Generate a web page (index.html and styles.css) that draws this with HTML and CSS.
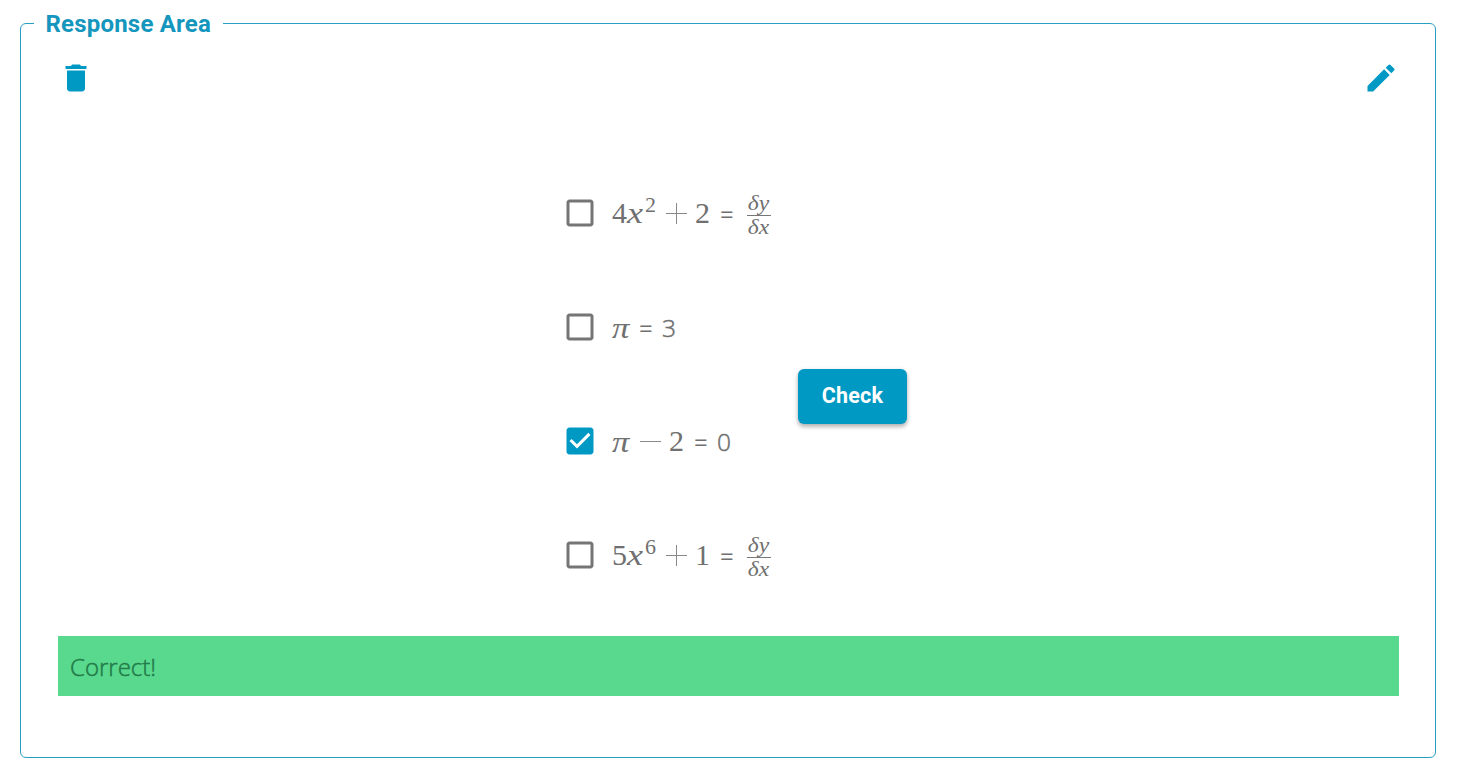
FILE: index.html
```html
<!DOCTYPE html>
<html lang="en">
<head>
<meta charset="utf-8">
<title>Response Area</title>
<link rel="stylesheet" href="styles.css">
</head>
<body>
<fieldset class="area">
  <legend class="legend">Response Area</legend>
  <div class="toolbar">
    <svg class="icon" viewBox="0 0 24 24"><path d="M6 19c0 1.1.9 2 2 2h8c1.1 0 2-.9 2-2V7H6v12zM19 4h-3.5l-1-1h-5l-1 1H5v2h14V4z"/></svg>
    <svg class="icon" viewBox="0 0 24 24"><path d="M3 17.25V21h3.75L17.81 9.94l-3.75-3.75L3 17.25zM20.71 7.04c.39-.39.39-1.02 0-1.41l-2.34-2.34a.9959.9959 0 0 0-1.41 0l-1.83 1.83 3.75 3.75 1.83-1.83z"/></svg>
  </div>
  <div class="question">
    <div class="options">
      <label class="option">
        <svg class="box" viewBox="0 0 24 24"><path d="M19 5v14H5V5h14m0-2H5c-1.1 0-2 .9-2 2v14c0 1.1.9 2 2 2h14c1.1 0 2-.9 2-2V5c0-1.1-.9-2-2-2z"/></svg>
        <span class="math"><span class="num">4</span><i class="var">x</i><span class="sup">2</span><span class="op plus"></span><span class="num term">2</span><span class="eq">=</span><span class="frac"><i class="part">δy</i><span class="bar"></span><i class="part">δx</i></span></span>
      </label>
      <label class="option">
        <svg class="box" viewBox="0 0 24 24"><path d="M19 5v14H5V5h14m0-2H5c-1.1 0-2 .9-2 2v14c0 1.1.9 2 2 2h14c1.1 0 2-.9 2-2V5c0-1.1-.9-2-2-2z"/></svg>
        <span class="math"><i class="pi">π</i><span class="eq">=</span><span class="plain">3</span></span>
      </label>
      <label class="option">
        <svg class="box checked" viewBox="0 0 24 24"><path d="M19 3H5c-1.11 0-2 .9-2 2v14c0 1.1.89 2 2 2h14c1.11 0 2-.9 2-2V5c0-1.1-.89-2-2-2zm-9 14l-5-5 1.41-1.41L10 14.17l7.59-7.59L19 8l-9 9z"/></svg>
        <span class="math"><i class="pi">π</i><span class="op minus"></span><span class="num term">2</span><span class="eq">=</span><span class="plain">0</span></span>
      </label>
      <label class="option">
        <svg class="box" viewBox="0 0 24 24"><path d="M19 5v14H5V5h14m0-2H5c-1.1 0-2 .9-2 2v14c0 1.1.9 2 2 2h14c1.1 0 2-.9 2-2V5c0-1.1-.9-2-2-2z"/></svg>
        <span class="math"><span class="num">5</span><i class="var">x</i><span class="sup">6</span><span class="op plus"></span><span class="num term">1</span><span class="eq">=</span><span class="frac"><i class="part">δy</i><span class="bar"></span><i class="part">δx</i></span></span>
      </label>
    </div>
    <button class="check">Check</button>
  </div>
  <div class="feedback">Correct!</div>
</fieldset>
</body>
</html>
```
FILE: styles.css
```css
* { box-sizing: border-box; }
body {
  margin: 0;
  padding: 10px 21px 0 20px;
  background: #fff;
  font-family: "Open Sans", "Noto Sans", sans-serif;
}
.area {
  height: 748px;
  margin: 0;
  padding: 23px 36px 0 37px;
  border: 1px solid #2a9fc4;
  border-radius: 6px;
}
.legend {
  height: 27px;
  margin-left: -24px;
  padding: 0 12px 0 11.5px;
  color: #1496bd;
  font: 700 24px/28px Roboto, sans-serif;
  letter-spacing: .2px;
}
.toolbar {
  display: flex;
  justify-content: space-between;
  height: 96px;
}
.icon {
  width: 36px;
  height: 36px;
  fill: #0099c4;
}
.question {
  display: flex;
  align-items: center;
  height: 480px;
  padding-left: 504px;
}
.options {
  align-self: flex-start;
  width: 236px;
}
.option {
  display: flex;
  height: 114px;
}
.box {
  flex: none;
  width: 36px;
  height: 36px;
  margin: 39px 14px 0 0;
  fill: #757575;
}
.box.checked { fill: #0099c4; }
.math {
  display: flex;
  align-items: baseline;
  height: 78px;
  margin-top: 36px;
  color: #707070;
  font: 30px/42px "Liberation Serif", serif;
  white-space: nowrap;
}
.num { width: 15px; }
.var {
  width: 18px;
  transform: scaleX(1.2);
  transform-origin: left;
}
.sup {
  width: 11px;
  font-size: 22px;
  transform: translateY(-11px);
}
.op {
  align-self: flex-start;
  width: 21px;
  height: 21px;
  margin: 11px 8px 0 10px;
}
.plus {
  background:
    linear-gradient(#888, #888) center / 100% 1px no-repeat,
    linear-gradient(#888, #888) center / 1px 100% no-repeat;
}
.minus { background: linear-gradient(#888, #888) center / 100% 1px no-repeat; }
.term { width: 16px; }
.eq {
  width: 14px;
  margin: 0 9px;
  font: 24px/36px "Open Sans", sans-serif;
}
.plain {
  font: 300 24.5px/36px "Open Sans", sans-serif;
  -webkit-text-stroke: .5px #707070;
}
.pi {
  width: 18px;
  transform: translateY(1px) scale(1.15, .97);
  transform-origin: left;
}
.frac {
  display: flex;
  flex-direction: column;
  align-items: center;
  width: 24px;
  margin-left: 4px;
  font-size: 21px;
  line-height: 24px;
  transform: translateY(-13px);
}
.part { transform: scaleX(1.12); }
.bar {
  align-self: stretch;
  height: 1px;
  margin-bottom: -1px;
  background: #777;
}
.check {
  width: 109px;
  height: 55px;
  padding: 0 0 2px;
  border: 0;
  border-radius: 6px;
  background: #0099c4;
  box-shadow: 0 3px 4px rgba(0, 0, 0, .24), 0 1px 5px rgba(0, 0, 0, .12);
  color: #fff;
  font: 700 21.5px/53px Roboto, sans-serif;
  letter-spacing: .2px;
}
.feedback {
  height: 60px;
  padding: 0 12px;
  background: #59d98e;
  color: #237b49;
  font-size: 24px;
  font-weight: 300;
  line-height: 62px;
  -webkit-text-stroke: .5px #237b49;
}
```
